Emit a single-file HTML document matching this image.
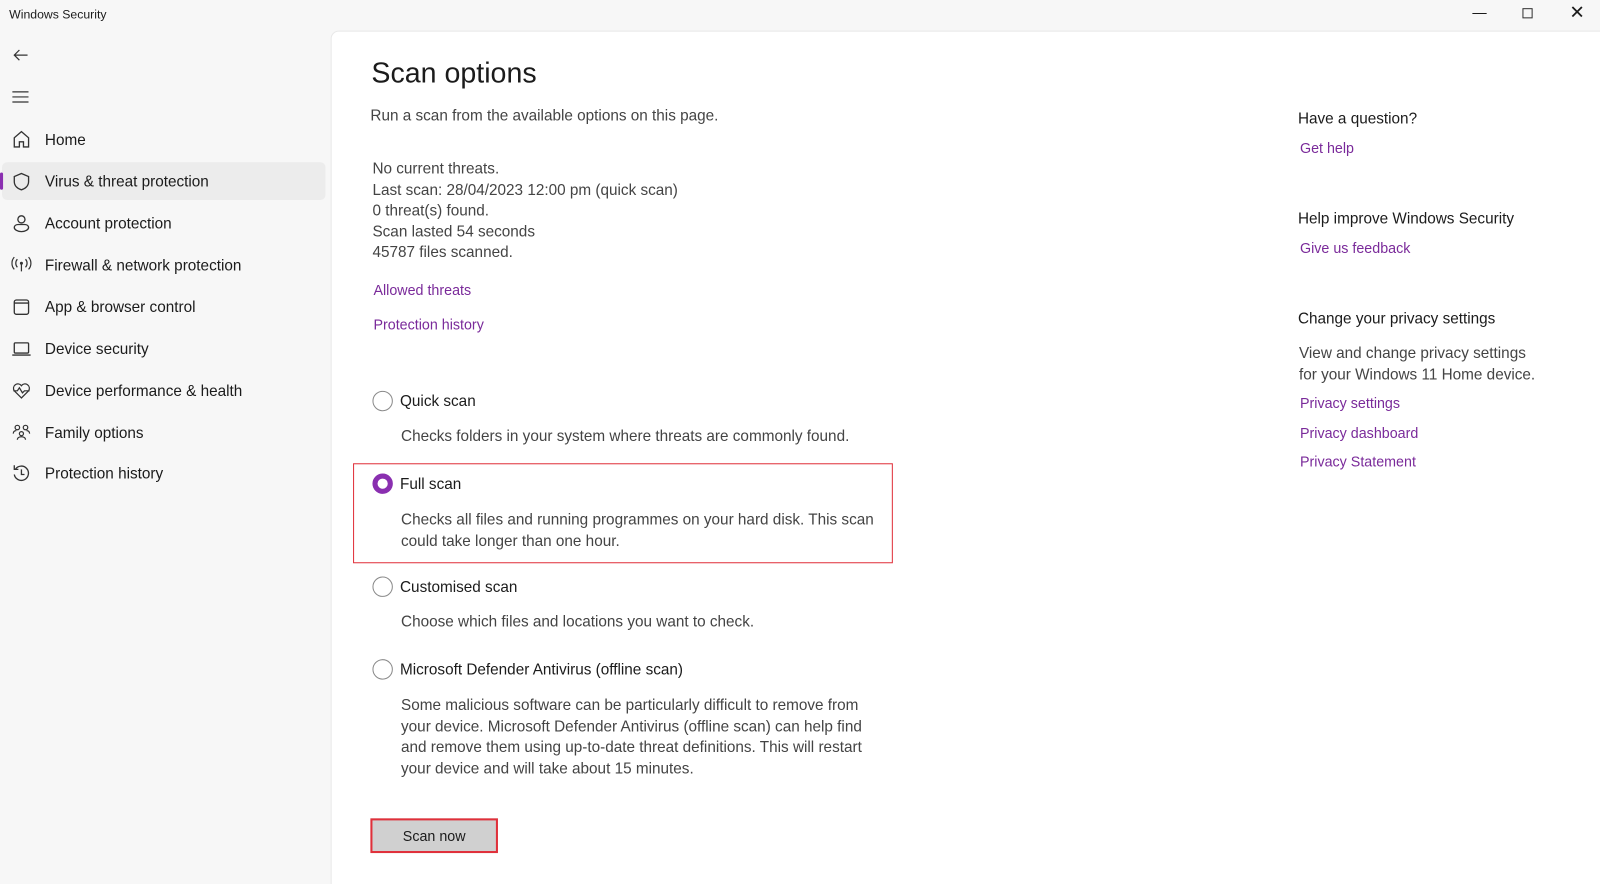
<!DOCTYPE html>
<html><head><meta charset="utf-8"><style>
*{margin:0;padding:0;box-sizing:border-box}
html,body{width:1600px;height:884px;overflow:hidden;background:#f7f7f7}
#w{width:1568px;height:866px;transform:scale(1.0204);transform-origin:0 0;position:relative;font-family:"Liberation Sans",sans-serif;color:#1b1b1b;font-size:15px}
.a{position:absolute;white-space:nowrap}
.main{position:absolute;left:324px;top:30px;width:1260px;height:860px;background:#fff;border:1px solid #e8e8e8;border-radius:8px 0 0 0}
.nav{position:absolute;left:44px;font-size:15px;color:#1b1b1b}
.ic{position:absolute;left:11px;width:20px;height:20px}
.g{color:#444}
.lk{color:#7a2a9a;font-size:14px}
.radio{position:absolute;left:365px;width:20px;height:20px;border:1.5px solid #8a8a8a;border-radius:50%;background:#fff}
</style></head><body><div id="w">
<div class="a" style="left:9px;top:7px;font-size:12px">Windows Security</div>
<div class="a" style="left:1443px;top:4px;font-size:14px">—</div>
<div class="a" style="left:1492px;top:8px;width:10px;height:10px;border:1px solid #333"></div>
<div class="a" style="left:1538px;top:2px;font-size:18px">✕</div>

<svg class="a" style="left:12px;top:46px" width="16" height="16" viewBox="0 0 16 16"><path d="M15 8H2M7 3L2 8l5 5" stroke="#333" fill="none" stroke-width="1.2"/></svg>
<svg class="a" style="left:12px;top:88px" width="16" height="14" viewBox="0 0 16 14"><path d="M0 2h16M0 7h16M0 12h16" stroke="#333" stroke-width="1.2"/></svg>

<div class="a" style="left:2px;top:159px;width:317px;height:37px;background:#ececec;border-radius:5px"></div>
<div class="a" style="left:0;top:169px;width:3px;height:17px;background:#8a2fb0;border-radius:2px"></div>

<svg class="ic" style="top:127px" viewBox="0 0 20 20"><path d="M3 17V8l7-6 7 6v9h-5v-5H8v5z" stroke="#333" fill="none" stroke-width="1.3"/></svg>
<div class="nav" style="top:129px">Home</div>
<svg class="ic" style="top:168px" viewBox="0 0 20 20"><path d="M10 2l7 3v5c0 4-3 7-7 8-4-1-7-4-7-8V5z" stroke="#333" fill="none" stroke-width="1.3"/></svg>
<div class="nav" style="top:170px">Virus &amp; threat protection</div>
<svg class="ic" style="top:209px" viewBox="0 0 20 20"><circle cx="10" cy="6" r="3.5" stroke="#333" fill="none" stroke-width="1.3"/><path d="M3 14c0-2 2-3 4-3h6c2 0 4 1 4 3 0 2-3 4-7 4s-7-2-7-4z" stroke="#333" fill="none" stroke-width="1.3"/></svg>
<div class="nav" style="top:211px">Account protection</div>
<svg class="ic" style="top:250px" viewBox="0 0 20 20"><circle cx="10" cy="8" r="1.5" fill="#333"/><path d="M10 9v7M6 4a6 6 0 000 8M14 4a6 6 0 010 8M3 2a9 9 0 000 12M17 2a9 9 0 010 12" stroke="#333" fill="none" stroke-width="1.2"/></svg>
<div class="nav" style="top:252px">Firewall &amp; network protection</div>
<svg class="ic" style="top:291px" viewBox="0 0 20 20"><rect x="3" y="3" width="14" height="14" rx="2" stroke="#333" fill="none" stroke-width="1.3"/><path d="M3 6h14" stroke="#333" stroke-width="1.3"/></svg>
<div class="nav" style="top:293px">App &amp; browser control</div>
<svg class="ic" style="top:332px" viewBox="0 0 20 20"><rect x="3" y="4" width="14" height="10" rx="1" stroke="#333" fill="none" stroke-width="1.3"/><path d="M1 16h18" stroke="#333" stroke-width="1.3"/></svg>
<div class="nav" style="top:334px">Device security</div>
<svg class="ic" style="top:373px" viewBox="0 0 20 20"><path d="M10 17L3 10a4 4 0 017-5 4 4 0 017 5zM2 10h4l2-3 3 5 2-2h5" stroke="#333" fill="none" stroke-width="1.2"/></svg>
<div class="nav" style="top:375px">Device performance &amp; health</div>
<svg class="ic" style="top:414px" viewBox="0 0 20 20"><circle cx="6" cy="5" r="2.2" stroke="#333" fill="none" stroke-width="1.2"/><circle cx="14" cy="5" r="2.2" stroke="#333" fill="none" stroke-width="1.2"/><circle cx="10" cy="11" r="2" stroke="#333" fill="none" stroke-width="1.2"/><path d="M2 11c0-2 1-3 3-3M18 11c0-2-1-3-3-3M6 17c0-2 2-3 4-3s4 1 4 3" stroke="#333" fill="none" stroke-width="1.2"/></svg>
<div class="nav" style="top:416px">Family options</div>
<svg class="ic" style="top:454px" viewBox="0 0 20 20"><path d="M4 6a7 7 0 11-1 5M3 2v4h4M10 6v5h3" stroke="#333" fill="none" stroke-width="1.3"/></svg>
<div class="nav" style="top:456px">Protection history</div>

<div class="main"></div>
<div class="a" style="left:364px;top:56px;font-size:28px">Scan options</div>
<div class="a g" style="left:363px;top:105px">Run a scan from the available options on this page.</div>
<div class="a g" style="left:365px;top:156px;line-height:20.5px">No current threats.<br>Last scan: 28/04/2023 12:00 pm (quick scan)<br>0 threat(s) found.<br>Scan lasted 54 seconds<br>45787 files scanned.</div>
<div class="a lk" style="left:366px;top:276px">Allowed threats</div>
<div class="a lk" style="left:366px;top:310px">Protection history</div>

<div class="radio" style="top:383px"></div>
<div class="a" style="left:392px;top:385px">Quick scan</div>
<div class="a g" style="left:393px;top:419px">Checks folders in your system where threats are commonly found.</div>

<div class="a" style="left:346px;top:454px;width:529px;height:98px;border:1.5px solid #e0303a"></div>
<div class="radio" style="top:464px;border:5px solid #8a2fb0"></div>
<div class="a" style="left:392px;top:466px">Full scan</div>
<div class="a g" style="left:393px;top:500px;line-height:20.5px">Checks all files and running programmes on your hard disk. This scan<br>could take longer than one hour.</div>

<div class="radio" style="top:565px"></div>
<div class="a" style="left:392px;top:567px">Customised scan</div>
<div class="a g" style="left:393px;top:601px">Choose which files and locations you want to check.</div>

<div class="radio" style="top:646px"></div>
<div class="a" style="left:392px;top:648px">Microsoft Defender Antivirus (offline scan)</div>
<div class="a g" style="left:393px;top:682px;line-height:20.5px">Some malicious software can be particularly difficult to remove from<br>your device. Microsoft Defender Antivirus (offline scan) can help find<br>and remove them using up-to-date threat definitions. This will restart<br>your device and will take about 15 minutes.</div>

<div class="a" style="left:363px;top:802px;width:125px;height:34px;border:2px solid #e0303a;background:#d0d0d0;font-size:14px;text-align:center;line-height:30px">Scan now</div>

<div class="a" style="left:1272px;top:108px">Have a question?</div>
<div class="a lk" style="left:1274px;top:137px">Get help</div>
<div class="a" style="left:1272px;top:206px">Help improve Windows Security</div>
<div class="a lk" style="left:1274px;top:235px">Give us feedback</div>
<div class="a" style="left:1272px;top:304px">Change your privacy settings</div>
<div class="a g" style="left:1273px;top:337px;line-height:20.5px">View and change privacy settings<br>for your Windows 11 Home device.</div>
<div class="a lk" style="left:1274px;top:387px">Privacy settings</div>
<div class="a lk" style="left:1274px;top:416px">Privacy dashboard</div>
<div class="a lk" style="left:1274px;top:444px">Privacy Statement</div>
</div></body></html>
